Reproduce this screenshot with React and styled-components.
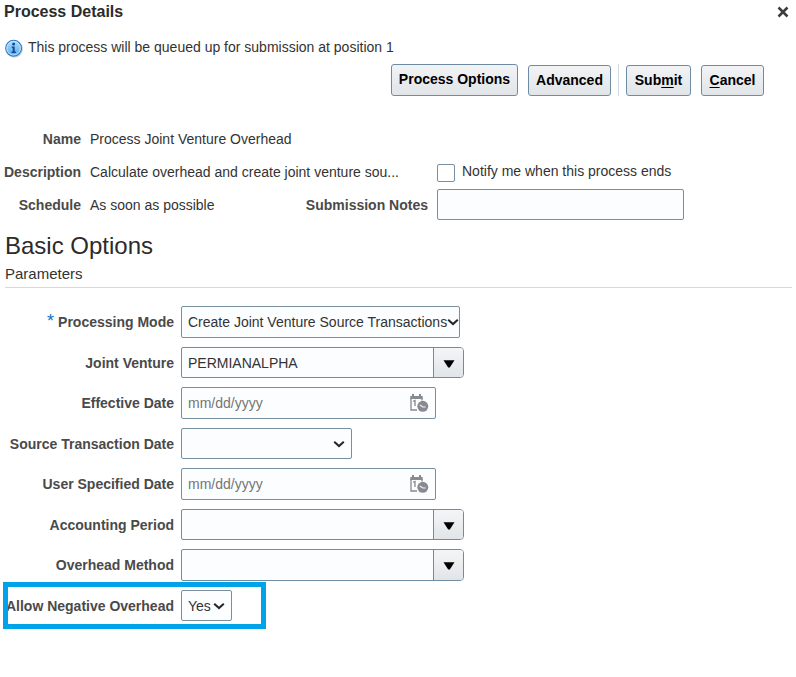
import React from "react";
import styled, { createGlobalStyle, css } from "styled-components";

const GlobalStyle = createGlobalStyle`
  *, *::before, *::after { box-sizing: border-box; }
  body { margin: 0; background: #fff; }
  button, input { font: inherit; }
`;

const Dialog = styled.main`
  width: 796px;
  height: 677px;
  overflow: hidden;
  background: #fff;
  color: #333;
  font: 14px/16px "Liberation Sans", Arial, sans-serif;
`;

const Header = styled.header`
  display: flex;
  justify-content: space-between;
  height: 39px;
  padding: 3px 7px 0 4px;
`;

const Title = styled.h1`
  margin: 0;
  color: #2b2b2b;
  font-size: 16px;
  line-height: 18px;
  white-space: nowrap;
`;

const CloseButton = styled.button`
  width: 12px;
  height: 12px;
  margin-top: 3px;
  padding: 0;
  border: 0;
  background: none;
  svg { display: block; }
`;

const Message = styled.div`
  display: flex;
  height: 25px;
  padding-left: 5px;
  gap: 4px;
  svg { flex: none; }
`;

const Toolbar = styled.div`
  display: flex;
  align-items: flex-end;
  height: 32px;
  padding-left: 391px;
`;

const ToolButton = styled.button`
  width: ${(p) => p.$width}px;
  height: ${(p) => (p.$tall ? 32 : 31)}px;
  margin-right: 10px;
  padding: 0 0 2px;
  border: 1px solid #6f8ca5;
  border-radius: 3px;
  background: linear-gradient(#f2f3f5, #e1e5e8);
  color: #000;
  font-weight: bold;
  line-height: 16px;
  white-space: nowrap;
  u { text-underline-offset: 2px; }
`;

const Divider = styled.span`
  width: 1px;
  height: 32px;
  margin: 0 7px 0 -3px;
  background: #d0d9e2;
`;

const Summary = styled.section`
  display: grid;
  grid-template-columns: 81px 347px 1fr;
  grid-template-rows: 33px 33px 33px;
  align-items: center;
  height: 99px;
  margin-top: 26px;
`;

const Label = styled.label`
  color: #4a4a4a;
  font-weight: bold;
  text-align: right;
  white-space: nowrap;
`;

const Value = styled.span`
  display: flex;
  justify-content: space-between;
  padding-left: 9px;
  white-space: nowrap;
`;

const CheckLabel = styled.label`
  display: flex;
  gap: 7px;
  padding-left: 9px;
`;

const Checkbox = styled.input.attrs({ type: "checkbox" })`
  appearance: none;
  width: 18px;
  height: 18px;
  margin: 1px 0 -1px;
  border: 1px solid #778f9f;
  border-radius: 2px;
  background: #fff;
`;

const fieldBox = css`
  border: 1px solid #778f9f;
  border-radius: 2px;
  background: #fcfdff;
`;

const NotesInput = styled.input`
  ${fieldBox}
  width: 247px;
  height: 31px;
  margin-left: 9px;
`;

const SectionHead = styled.header`
  margin: 11px 4px 0 5px;
  height: 56px;
  border-bottom: 1px solid #d0dae2;
`;

const SectionTitle = styled.h2`
  margin: 0;
  color: #2b2b2b;
  font-weight: normal;
  font-size: 24px;
  line-height: 28px;
`;

const SectionSubtitle = styled.h3`
  margin: 5px 0 0;
  font-weight: normal;
  font-size: 15px;
  line-height: 17px;
`;

const Form = styled.form`
  display: flex;
  flex-direction: column;
  gap: 9px;
  margin-top: 18px;
`;

const Row = styled.div`
  position: relative;
  display: grid;
  grid-template-columns: 174px auto;
  justify-content: start;
  align-items: center;
  column-gap: 7px;
  height: ${(p) => (p.$tall ? 32 : 31)}px;
`;

const Required = styled.span`
  display: inline-block;
  margin-right: 4px;
  color: #0572ce;
  font-size: 18px;
  font-weight: normal;
  line-height: 12px;
`;

const Field = styled.div`
  ${fieldBox}
  display: flex;
  align-items: center;
  justify-content: space-between;
  width: ${(p) => p.$width}px;
  height: 100%;
  padding: 0 6px;
  color: ${(p) => (p.$muted ? "#757575" : "#333")};
  white-space: nowrap;
  svg { flex: none; }
`;

const Combo = styled(Field)`
  padding-right: 0;
  border-color: #6f8ca5;
  border-radius: 2px 4px 4px 2px;
`;

const ComboButton = styled.button`
  display: flex;
  align-items: center;
  justify-content: center;
  width: 30px;
  height: 100%;
  margin-left: auto;
  padding: 2px 0 0;
  border: 0;
  border-left: 1px solid #6f8ca5;
  border-radius: 0 3px 3px 0;
  background: linear-gradient(#f4f5f6, #e1e5e8);
`;

const Highlight = styled.span`
  position: absolute;
  left: 3px;
  top: -8px;
  width: 263px;
  height: 47px;
  border: 5px solid #00a2e8;
  pointer-events: none;
`;

const CloseIcon = () => (
  <svg width="12" height="12" viewBox="0 0 12 12">
    <path d="M1.5 1.5 10.5 10.5M10.5 1.5 1.5 10.5" stroke="#3d3d3d" strokeWidth="2.5" />
  </svg>
);

const InfoIcon = () => (
  <svg width="19" height="19" viewBox="0 0 19 19">
    <defs>
      <linearGradient id="info" x1="0" y1="0" x2="0" y2="1">
        <stop offset="0" stopColor="#b4dcfb" />
        <stop offset="1" stopColor="#54aef3" />
      </linearGradient>
    </defs>
    <circle cx="9.3" cy="10" r="8.6" fill="#c5cbd1" />
    <circle cx="8.6" cy="9.2" r="7.9" fill="url(#info)" stroke="#2c7ac8" strokeWidth="1.1" />
    <circle cx="8.6" cy="9.2" r="6.8" fill="none" stroke="#d1eafd" strokeWidth=".8" />
    <circle cx="8.6" cy="5" r="1.5" fill="#114e9a" />
    <path d="M6.7 7.6h3v5h1.2v1.3H6.5v-1.3h1.2V8.9h-1z" fill="#114e9a" />
  </svg>
);

const Chevron = () => (
  <svg width="12" height="8" viewBox="0 0 12 8">
    <path d="M1.2 1.7 6 6.1 10.8 1.7" fill="none" stroke="#262626" strokeWidth="2" />
  </svg>
);

const Triangle = () => (
  <svg width="12" height="8" viewBox="0 0 12 8">
    <path d="M.5.3h11L6.8 7.5H5.2z" fill="#000" />
  </svg>
);

const CalendarClock = () => (
  <svg width="20" height="20" viewBox="0 0 20 20">
    <path d="M2 5v12h6M13 5v4" fill="none" stroke="#858b90" strokeWidth="1.3" />
    <path d="M1.3 3h12.4v3H1.3z" fill="#858b90" />
    <path d="M4 1v4M11 1v4" stroke="#858b90" strokeWidth="2" />
    <path d="M4.2 8.4 6 7.6V13" fill="none" stroke="#858b90" strokeWidth="1.3" />
    <circle cx="13.8" cy="13.3" r="6" fill="#fff" />
    <circle cx="13.8" cy="13.3" r="5.5" fill="#858b90" />
    <path d="m10.8 12.1 3 1.9h2.8" fill="none" stroke="#f3f5f7" strokeWidth="1.2" />
  </svg>
);

const SelectField = ({ width, children }) => (
  <Field $width={width}>
    <span>{children}</span>
    <Chevron />
  </Field>
);

const ComboField = ({ children }) => (
  <Combo $width={283}>
    <span>{children}</span>
    <ComboButton type="button" aria-label="Open list"><Triangle /></ComboButton>
  </Combo>
);

const DateField = () => (
  <Field $width={255} $muted>
    <span>mm/dd/yyyy</span>
    <CalendarClock />
  </Field>
);

export default function App() {
  return (
    <>
      <GlobalStyle />
      <Dialog>
        <Header>
          <Title>Process Details</Title>
          <CloseButton aria-label="Close"><CloseIcon /></CloseButton>
        </Header>
        <Message>
          <InfoIcon />
          <span>This process will be queued up for submission at position 1</span>
        </Message>
        <Toolbar>
          <ToolButton $width={127} $tall>Process Options</ToolButton>
          <ToolButton $width={83}>Advanced</ToolButton>
          <Divider />
          <ToolButton $width={65}>Sub<u>m</u>it</ToolButton>
          <ToolButton $width={63}><u>C</u>ancel</ToolButton>
        </Toolbar>
        <Summary>
          <Label>Name</Label>
          <Value>Process Joint Venture Overhead</Value>
          <span />
          <Label>Description</Label>
          <Value>Calculate overhead and create joint venture sou...</Value>
          <CheckLabel><Checkbox />Notify me when this process ends</CheckLabel>
          <Label>Schedule</Label>
          <Value>
            As soon as possible
            <Label htmlFor="notes">Submission Notes</Label>
          </Value>
          <NotesInput id="notes" />
        </Summary>
        <SectionHead>
          <SectionTitle>Basic Options</SectionTitle>
          <SectionSubtitle>Parameters</SectionSubtitle>
        </SectionHead>
        <Form>
          <Row $tall>
            <Label><Required>*</Required>Processing Mode</Label>
            <SelectField width={279}>Create Joint Venture Source Transactions</SelectField>
          </Row>
          <Row>
            <Label>Joint Venture</Label>
            <ComboField>PERMIANALPHA</ComboField>
          </Row>
          <Row $tall>
            <Label>Effective Date</Label>
            <DateField />
          </Row>
          <Row>
            <Label>Source Transaction Date</Label>
            <SelectField width={171} />
          </Row>
          <Row $tall>
            <Label>User Specified Date</Label>
            <DateField />
          </Row>
          <Row>
            <Label>Accounting Period</Label>
            <ComboField />
          </Row>
          <Row $tall>
            <Label>Overhead Method</Label>
            <ComboField />
          </Row>
          <Row>
            <Label>Allow Negative Overhead</Label>
            <SelectField width={51}>Yes</SelectField>
            <Highlight />
          </Row>
        </Form>
      </Dialog>
    </>
  );
}
